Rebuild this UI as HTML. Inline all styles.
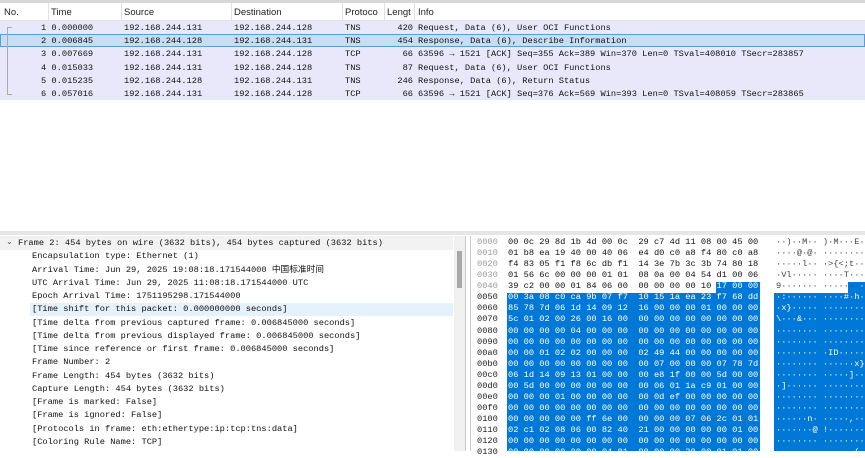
<!DOCTYPE html>
<html><head><meta charset="utf-8"><style>
*{margin:0;padding:0;box-sizing:border-box}
body{width:865px;height:451px;overflow:hidden;background:#fff;position:relative;font-family:"Liberation Mono","Noto Sans CJK SC",monospace;font-size:8.7px;color:#111}
.a{position:absolute;white-space:pre}
.hdr{font-family:"Liberation Sans",sans-serif;font-size:9.5px;color:#222}
.sep{position:absolute;top:3px;height:19px;width:1px;background:#e2e2e2}
.row{position:absolute;left:0;width:865px;height:13.2px;background:#e9e8fa}
.hl{position:absolute;background:#0078d7}
.w{color:#fff}
</style></head><body>
<div class="a" style="left:0;top:0;width:865px;height:3px;background:#d8d8d8"></div>
<div class="a" style="left:0;top:3px;width:865px;height:18px;background:#fff;border-bottom:1px solid #e5e5e5"></div>
<div class="a hdr" style="left:4px;top:7px">No.</div>
<div class="a hdr" style="left:51px;top:7px">Time</div>
<div class="a hdr" style="left:124px;top:7px">Source</div>
<div class="a hdr" style="left:234px;top:7px">Destination</div>
<div class="a hdr" style="left:345px;top:7px">Protoco</div>
<div class="a hdr" style="left:387px;top:7px">Lengt</div>
<div class="a hdr" style="left:418px;top:7px">Info</div>
<div class="sep" style="left:48px"></div><div class="sep" style="left:121px"></div><div class="sep" style="left:231px"></div><div class="sep" style="left:342px"></div><div class="sep" style="left:384px"></div><div class="sep" style="left:414px"></div>
<div class="row" style="top:21px"></div>
<div class="row" style="top:34.2px;background:#c4def5;border:1px solid #5b9bd6"></div>
<div class="row" style="top:47.4px"></div>
<div class="row" style="top:60.6px"></div>
<div class="row" style="top:73.8px"></div>
<div class="row" style="top:87px"></div>
<div class="a" style="left:7px;top:27px;width:1px;height:67px;background:#aaa"></div>
<div class="a" style="left:7px;top:27px;width:5px;height:1px;background:#aaa"></div>
<div class="a" style="left:7px;top:94px;width:5px;height:1px;background:#aaa"></div>
<div class="a" style="left:41px;top:22px;line-height:13.2px">1 0.000000
2 0.006845
3 0.007669
4 0.015033
5 0.015235
6 0.057016</div>
<div class="a" style="left:124px;top:22px;line-height:13.2px">192.168.244.131
192.168.244.128
192.168.244.131
192.168.244.131
192.168.244.128
192.168.244.131</div>
<div class="a" style="left:234px;top:22px;line-height:13.2px">192.168.244.128
192.168.244.131
192.168.244.128
192.168.244.128
192.168.244.131
192.168.244.128</div>
<div class="a" style="left:345px;top:22px;line-height:13.2px">TNS
TNS
TCP
TNS
TNS
TCP</div>
<div class="a" style="left:395px;top:22px;line-height:13.2px;text-align:right;width:18px">420
454
 66
 87
246
 66</div>
<div class="a" style="left:418px;top:22px;line-height:13.2px">Request, Data (6), User OCI Functions
Response, Data (6), Describe Information
63596 → 1521 [ACK] Seq=355 Ack=389 Win=370 Len=0 TSval=408010 TSecr=283857
Request, Data (6), User OCI Functions
Response, Data (6), Return Status
63596 → 1521 [ACK] Seq=376 Ack=569 Win=393 Len=0 TSval=408059 TSecr=283865</div>
<div class="a" style="left:0;top:231px;width:865px;height:4px;background:#e6e6e6"></div>
<div class="a" style="left:0;top:236px;width:453px;height:14px;background:#f2f2f2"></div>
<div class="a" style="left:30px;top:302.5px;width:423px;height:13.3px;background:#e5f1fb"></div>
<div class="a" style="left:6px;top:237px;font-family:'DejaVu Sans';font-size:8px;color:#555">⌄</div>
<div class="a" style="left:18px;top:237px;line-height:13.27px">Frame 2: 454 bytes on wire (3632 bits), 454 bytes captured (3632 bits)</div>
<div class="a" style="left:32px;top:250.3px;line-height:13.27px">Encapsulation type: Ethernet (1)
Arrival Time: Jun 29, 2025 19:08:18.171544000 中国标准时间
UTC Arrival Time: Jun 29, 2025 11:08:18.171544000 UTC
Epoch Arrival Time: 1751195298.171544000
[Time shift for this packet: 0.000000000 seconds]
[Time delta from previous captured frame: 0.006845000 seconds]
[Time delta from previous displayed frame: 0.006845000 seconds]
[Time since reference or first frame: 0.006845000 seconds]
Frame Number: 2
Frame Length: 454 bytes (3632 bits)
Capture Length: 454 bytes (3632 bits)
[Frame is marked: False]
[Frame is ignored: False]
[Protocols in frame: eth:ethertype:ip:tcp:tns:data]
[Coloring Rule Name: TCP]</div>
<div class="a" style="left:454px;top:236px;width:11px;height:215px;background:#f0f0f0"></div>
<div class="a" style="left:457px;top:251px;width:5px;height:37px;background:#a8a8a8"></div>
<div class="a" style="left:465px;top:236px;width:1px;height:215px;background:#ccc"></div>
<div class="a" style="left:470px;top:236px;width:1px;height:215px;background:#ccc"></div>
<div class="hl" style="left:716px;top:282px;width:44px;height:11px"></div>
<div class="hl" style="left:507px;top:293px;width:253px;height:158px"></div>
<div class="hl" style="left:848px;top:282px;width:17px;height:11px"></div>
<div class="hl" style="left:774px;top:293px;width:91px;height:158px"></div>
<div class="a" style="left:477px;top:237px;line-height:11.07px;color:#999">0000
0010
0020
0030
0040
<span style="color:#222">0050
0060
0070
0080
0090
00a0
00b0
00c0
00d0
00e0
00f0
0100
0110
0120
0130</span></div>
<div class="a" style="left:508px;top:237px;line-height:11.07px">00 0c 29 8d 1b 4d 00 0c  29 c7 4d 11 08 00 45 00
01 b8 ea 19 40 00 40 06  e4 d0 c0 a8 f4 80 c0 a8
f4 83 05 f1 f8 6c db f1  14 3e 7b 3c 3b 74 80 18
01 56 6c 00 00 00 01 01  08 0a 00 04 54 d1 00 06
39 c2 00 00 01 84 06 00  00 00 00 00 10 <span class="w">17 00 00</span><span class="w">
00 3a 08 c0 ca 9b 07 f7  10 15 1a ea 23 f7 68 dd
85 78 7d 06 1d 14 09 12  16 00 00 00 01 00 00 00
5c 01 02 00 26 00 16 00  00 00 00 00 00 00 00 00
00 00 00 00 04 00 00 00  00 00 00 00 00 00 00 00
00 00 00 00 00 00 00 00  00 00 00 00 00 00 00 00
00 00 01 02 02 00 00 00  02 49 44 00 00 00 00 00
00 00 00 00 00 00 00 00  00 07 00 00 00 07 78 7d
06 1d 14 09 13 01 00 00  00 e8 1f 00 00 5d 00 00
00 5d 00 00 00 00 00 00  00 06 01 1a c9 01 00 00
00 00 00 01 00 00 00 00  00 0d ef 00 00 00 00 00
00 00 00 00 00 00 00 00  00 00 00 00 00 00 00 00
00 00 00 00 00 ff 6e 00  00 00 00 07 06 2c 01 01
02 c1 02 08 06 00 82 40  21 00 00 00 00 00 01 00
00 00 00 00 00 00 00 00  00 00 00 00 00 00 00 00
00 00 00 00 00 00 04 01  00 00 00 20 00 01 01 00</span></div>
<div class="a" style="left:776px;top:237px;line-height:11.07px;color:#444">··)··M·· )·M···E·
····@·@· ········
·····l·· ·>{&lt;;t··
·Vl····· ····T···
9······· ·······<span class="w">·</span><span class="w">
·:······ ····#·h·
·x}····· ········
\···&amp;··· ········
········ ········
········ ········
········ ·ID·····
········ ······x}
········ ·····]··
·]······ ········
········ ········
········ ········
······n· ·····,··
·······@ !·······
········ ········
········ ···  ·(··</span></div>
</body></html>
